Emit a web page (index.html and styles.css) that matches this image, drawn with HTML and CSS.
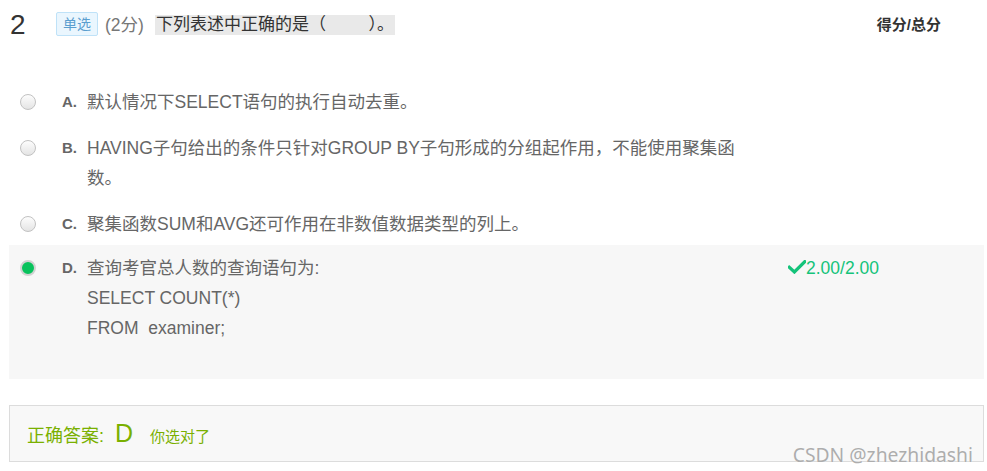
FILE: index.html
```html
<!DOCTYPE html>
<html lang="zh-CN">
<head>
<meta charset="utf-8">
<title>单选题</title>
<link rel="stylesheet" href="styles.css">
</head>
<body>
<div class="question">
  <div class="head">
    <span class="num">2</span>
    <span class="tag">单选</span>
    <span class="points">(2分)</span>
    <span class="title">下列表述中正确的是（&nbsp;&nbsp;&nbsp;&nbsp;&nbsp;&nbsp;&nbsp;&nbsp;&nbsp;）。</span>
    <span class="total">得分/总分</span>
  </div>
  <ul class="options">
    <li class="option">
      <span class="radio"></span>
      <span class="label">A.</span>
      <span class="text">默认情况下SELECT语句的执行自动去重。</span>
    </li>
    <li class="option">
      <span class="radio"></span>
      <span class="label">B.</span>
      <span class="text">HAVING子句给出的条件只针对GROUP BY子句形成的分组起作用，不能使用聚集函数。</span>
    </li>
    <li class="option option-c">
      <span class="radio"></span>
      <span class="label">C.</span>
      <span class="text">聚集函数SUM和AVG还可作用在非数值数据类型的列上。</span>
    </li>
    <li class="option option-selected">
      <span class="radio radio-checked"></span>
      <span class="label">D.</span>
      <span class="text">查询考官总人数的查询语句为:<br>SELECT COUNT(*)<br>FROM&nbsp; examiner;</span>
      <span class="score"><svg class="check" viewBox="0 0 18 14" width="18" height="14"><path d="M1.2 7.2 L6.4 12 L16.8 1.6" fill="none" stroke="currentColor" stroke-width="3.2" stroke-linecap="square"/></svg>2.00/2.00</span>
    </li>
  </ul>
  <div class="answer">
    <span class="answer-label">正确答案:</span>
    <span class="answer-key">D</span>
    <span class="answer-note">你选对了</span>
  </div>
</div>
<div class="watermark">CSDN @zhezhidashi</div>
</body>
</html>
```
FILE: styles.css
```css
html, body {
  margin: 0;
  padding: 0;
  background: #fff;
}
body {
  font-family: "Liberation Sans", "Noto Sans CJK SC", sans-serif;
  color: #333;
  width: 987px;
  height: 471px;
  overflow: hidden;
  position: relative;
}
.question {
  padding: 0 3px 0 9px;
}
.head {
  display: flex;
  align-items: center;
  height: 50px;
}
.num {
  width: 47px;
  padding-left: 1px;
  box-sizing: border-box;
  font-size: 28px;
  line-height: 30px;
  color: #333;
}
.tag {
  display: inline-block;
  width: 42px;
  height: 24px;
  box-sizing: border-box;
  border: 1px solid #bfe2f8;
  background: #eaf6fe;
  border-radius: 2px;
  color: #5a9ecf;
  font-size: 14px;
  line-height: 22px;
  text-align: center;
  margin-top: -2px;
}
.points {
  margin-left: 7px;
  font-size: 17.5px;
  color: #777;
  line-height: 20px;
}
.title {
  margin-left: 11px;
  background: #e9e9e9;
  padding: 0 1px 0 1px;
  font-size: 17px;
  line-height: 20px;
  color: #333;
}
.total {
  margin-left: auto;
  margin-right: 43px;
  font-size: 15px;
  font-weight: bold;
  color: #333;
  margin-top: -4px;
}
.options {
  list-style: none;
  margin: 29px 0 0;
  padding: 0;
}
.option {
  display: flex;
  align-items: flex-start;
  padding: 8px 0;
  line-height: 30px;
  font-size: 17.5px;
  color: #666;
}
.option-c {
  padding-bottom: 6px;
}
.option-selected {
  background: #f7f7f7;
  padding-bottom: 36px;
}
.radio {
  flex: none;
  width: 16px;
  height: 16px;
  box-sizing: border-box;
  border-radius: 50%;
  border: 1px solid #c2c2c2;
  background: linear-gradient(#fdfdfd, #e4e4e4);
  margin: 7px 0 0 11px;
}
.radio-checked {
  border: 2px solid #d2d2d2;
  background: #08c25c;
}
.label {
  flex: none;
  width: 25px;
  margin-left: 26px;
  font-weight: bold;
  font-size: 15px;
  color: #666;
}
.text {
  flex: none;
  width: 655px;
}
.score {
  display: flex;
  align-items: center;
  margin-left: 46px;
  font-size: 17.5px;
  color: #14c37a;
  line-height: 30px;
}
.check {
  margin-top: -3px;
}
.answer {
  margin-top: 26px;
  height: 57px;
  box-sizing: border-box;
  border: 1px solid #dcdcdc;
  background: #f8f8f8;
  display: flex;
  align-items: baseline;
  padding: 12px 0 0 17px;
  color: #7ab000;
}
.answer-label {
  font-size: 18px;
  line-height: 30px;
}
.answer-key {
  font-size: 25px;
  margin-left: 11px;
  line-height: 30px;
}
.answer-note {
  font-size: 15px;
  margin-left: 17px;
  line-height: 30px;
}
.watermark {
  position: absolute;
  right: 14px;
  bottom: 3px;
  font-family: "Noto Sans", sans-serif;
  font-size: 19.3px;
  color: #adadad;
  line-height: 26px;
  text-shadow: 0 0 1px #fff;
}
```
